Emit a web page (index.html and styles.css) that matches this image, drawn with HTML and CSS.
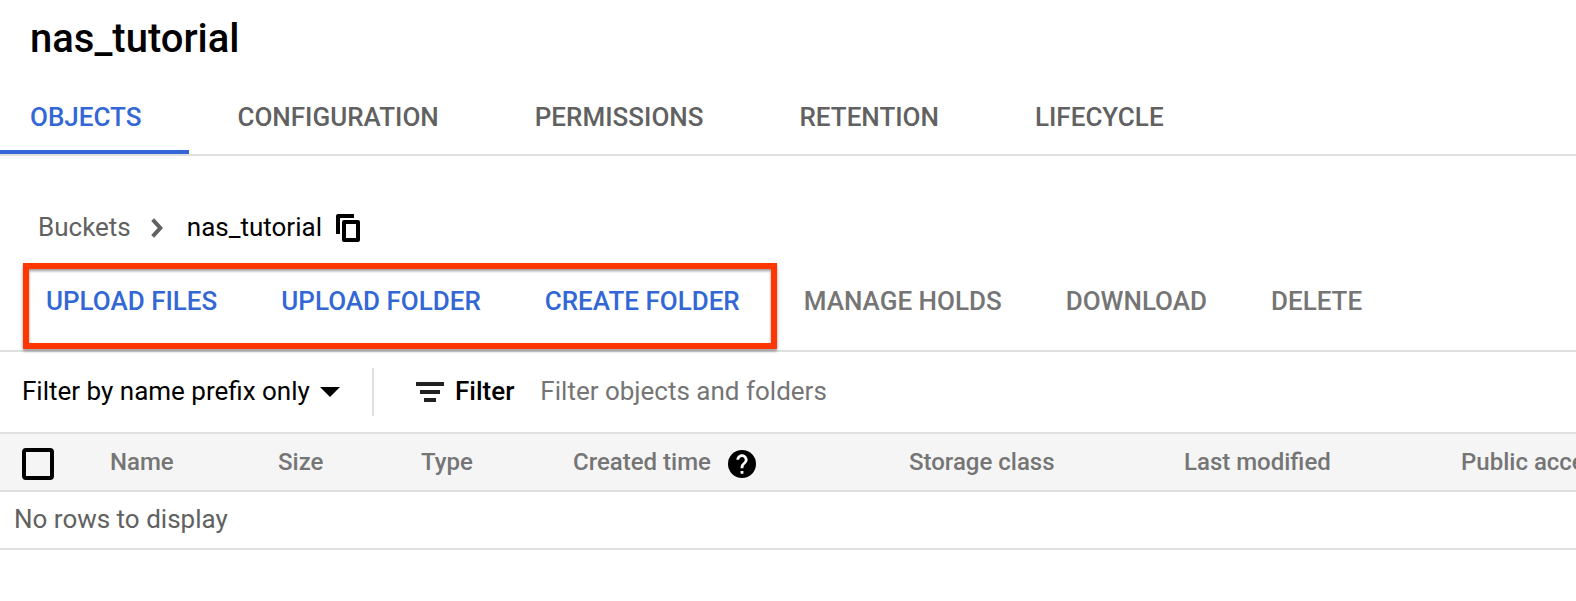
FILE: index.html
```html
<!DOCTYPE html>
<html lang="en">
<head>
<meta charset="utf-8">
<meta name="viewport" content="width=device-width, initial-scale=1">
<title>nas_tutorial</title>
<link rel="stylesheet" href="styles.css">
</head>
<body>
<header class="page-header">
  <h1 class="title">nas_tutorial</h1>
  <nav class="tabs" aria-label="Bucket sections">
    <a class="tab tab-active" href="#objects" aria-current="page">OBJECTS</a>
    <a class="tab" href="#configuration">CONFIGURATION</a>
    <a class="tab" href="#permissions">PERMISSIONS</a>
    <a class="tab" href="#retention">RETENTION</a>
    <a class="tab" href="#lifecycle">LIFECYCLE</a>
  </nav>
</header>
<main>
  <nav class="breadcrumb" aria-label="Breadcrumb">
    <a class="crumb" href="#buckets">Buckets</a>
    <svg class="chevron" width="12" height="20" viewBox="0 0 12 20" aria-hidden="true"><path d="M1.700 1.700 9.300 10 1.700 18.300" fill="none" stroke="#616161" stroke-width="4"/></svg>
    <span>nas_tutorial</span>
    <button class="copy" type="button" aria-label="Copy path">
      <svg width="24" height="28" viewBox="0 0 24 28" aria-hidden="true"><path d="M2 20V2H18" fill="none" stroke="#000" stroke-width="4" stroke-linejoin="round"/><rect x="8" y="8" width="14" height="18" fill="none" stroke="#000" stroke-width="4" stroke-linejoin="round"/></svg>
    </button>
  </nav>
  <div class="actions">
    <div class="highlight">
      <button class="action" type="button">UPLOAD FILES</button>
      <button class="action" type="button">UPLOAD FOLDER</button>
      <button class="action" type="button">CREATE FOLDER</button>
    </div>
    <div class="more-actions">
      <button class="action" type="button" disabled>MANAGE HOLDS</button>
      <button class="action" type="button" disabled>DOWNLOAD</button>
      <button class="action" type="button" disabled>DELETE</button>
    </div>
  </div>
  <div class="filter-bar">
    <div class="prefix">
      <select class="prefix-select" aria-label="Filter mode"><option>Filter by name prefix only</option></select>
      <svg class="caret" width="20" height="10" viewBox="0 0 20 10" aria-hidden="true"><path d="M0 0H20L10 10Z"/></svg>
    </div>
    <div class="filter">
      <svg width="28" height="20" viewBox="0 0 28 20" aria-hidden="true"><path d="M0 0H28V4H0ZM4 8H24V12H4ZM8 16H20V20H8Z" fill="#212121"/></svg>
      <label class="filter-label" for="filter-input">Filter</label>
      <input class="filter-input" id="filter-input" type="text" placeholder="Filter objects and folders">
    </div>
  </div>
  <div class="table-wrap">
    <table class="objects">
      <colgroup>
        <col class="c-check"><col class="c-name"><col class="c-size"><col class="c-type"><col class="c-created"><col class="c-storage"><col class="c-modified"><col class="c-public">
      </colgroup>
      <thead>
        <tr>
          <th class="check-cell"><input class="check" type="checkbox" aria-label="Select all objects"></th>
          <th>Name</th>
          <th>Size</th>
          <th>Type</th>
          <th><div class="created">Created time
            <svg class="help" width="28" height="28" viewBox="2 2 20 20" role="img" aria-label="Help"><circle cx="12" cy="12" r="10"/><path fill="#fff" d="M13 19h-2v-2h2v2zm2.070-7.750-.9.920C13.450 12.900 13 13.500 13 15h-2v-.5c0-1.100.450-2.100 1.170-2.830l1.240-1.260c.370-.360.590-.860.590-1.410 0-1.100-.9-2-2-2s-2 .9-2 2H8c0-2.210 1.790-4 4-4s4 1.790 4 4c0 .880-.360 1.680-.930 2.250z"/></svg></div></th>
          <th>Storage class</th>
          <th>Last modified</th>
          <th>Public access</th>
        </tr>
      </thead>
      <tbody>
        <tr><td class="empty" colspan="8">No rows to display</td></tr>
      </tbody>
    </table>
  </div>
</main>
</body>
</html>
```
FILE: styles.css
```css
* {
  box-sizing: border-box;
}

body {
  margin: 0;
  background: #fff;
  color: #000;
  font: 400 26px/32px Roboto, "Liberation Sans", sans-serif;
}

button,
input,
select {
  font: inherit;
}

a {
  text-decoration: none;
}

button {
  padding: 0;
  border: 0;
  background: none;
}

.title {
  margin: 0;
  padding: 15px 30px 21px;
  font-size: 40px;
  line-height: 48px;
  font-weight: 500;
}

.tabs {
  display: flex;
  border-bottom: 2px solid #e0e0e0;
}

.tab {
  padding: 0 48px;
  border-bottom: 4px solid transparent;
  color: #616161;
  font-weight: 500;
  line-height: 66px;
}

.tab-active {
  padding-left: 30px;
  border-color: #3367d6;
  color: #3367d6;
}

.breadcrumb {
  display: flex;
  align-items: center;
  padding: 55px 38px 20px;
}

.crumb {
  color: #616161;
}

.chevron {
  margin: 2px 24px 0 20px;
}

.copy {
  display: flex;
  margin: 2px 0 0 14px;
}

.actions {
  display: flex;
  gap: 27px;
  padding: 0 23px 1px;
  border-bottom: 2px solid #e0e0e0;
}

.highlight,
.more-actions {
  display: flex;
  gap: 64px;
}

.highlight {
  padding: 0 31px 10px 17px;
  border: 6px solid #ff3600;
  box-shadow: 0 2px 3px rgb(0 0 0 / 40%), inset 0 2px 3px rgb(0 0 0 / 40%);
}

.more-actions {
  padding: 6px 0;
}

.action {
  height: 64px;
  color: #3367d6;
  font-weight: 500;
  white-space: nowrap;
}

.action:disabled {
  color: #757575;
}

.filter-bar {
  display: flex;
  align-items: center;
  height: 80px;
}

.prefix {
  display: flex;
  align-items: center;
  height: 48px;
  padding: 0 32px 0 22px;
  border-right: 2px solid #e0e0e0;
}

.prefix-select {
  appearance: none;
  padding: 0 30px 2px 0;
  margin-right: -20px;
  border: 0;
  background: none;
  color: #000;
}

.caret {
  pointer-events: none;
}

.filter {
  display: flex;
  flex: 1;
  align-items: center;
  padding-left: 42px;
}

.filter-label {
  padding: 0 26px 2px 11px;
  font-weight: 500;
}

.filter-input {
  flex: 1;
  min-width: 0;
  padding: 0 0 2px;
  border: 0;
  outline: 0;
}

.filter-input::placeholder {
  color: #757575;
}

.table-wrap {
  overflow: hidden;
}

.objects {
  width: 100%;
  min-width: 1660px;
  table-layout: fixed;
  border-spacing: 0;
}

.c-check { width: 110px; }
.c-name { width: 168px; }
.c-size { width: 143px; }
.c-type { width: 152px; }
.c-created { width: 336px; }
.c-storage { width: 275px; }
.c-modified { width: 277px; }

.objects th {
  height: 60px;
  padding: 0;
  border: solid #e0e0e0;
  border-width: 2px 0;
  background: #f5f5f5;
  color: #757575;
  font-size: 24px;
  font-weight: 500;
  text-align: left;
}

.objects .check-cell {
  padding: 4px 0 0 22px;
}

.check {
  display: block;
  appearance: none;
  width: 32px;
  height: 32px;
  margin: 0;
  border: 4px solid #000;
  border-radius: 4px;
}

.created {
  display: flex;
  align-items: center;
  gap: 17px;
}

.help {
  margin-top: 4px;
}

.objects .empty {
  height: 58px;
  padding: 0 14px 2px;
  border-bottom: 2px solid #e0e0e0;
  color: #616161;
}
```
